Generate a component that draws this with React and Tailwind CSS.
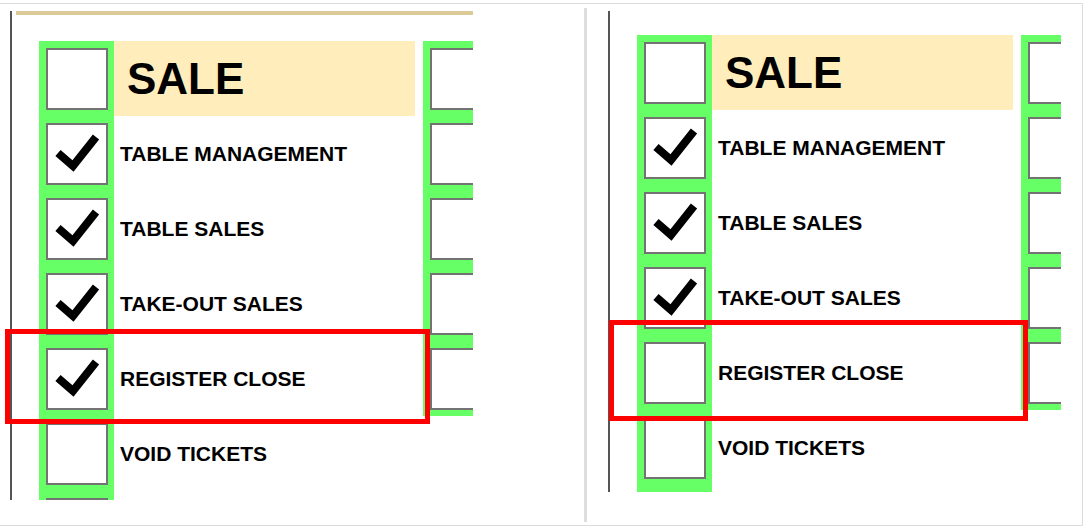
import React from "react";

function Box({ checked }) {
  return (
    <div className="relative w-[62px] h-[62px] shrink-0 border-2 border-[#737373] bg-white">
      {checked && (
        <svg
          className="absolute left-0 top-0"
          width="58"
          height="58"
          viewBox="0 0 58 58"
        >
          <polyline
            points="10,28 25,41 48,12"
            fill="none"
            stroke="#000"
            strokeWidth="8"
            strokeLinejoin="miter"
            strokeLinecap="butt"
          />
        </svg>
      )}
    </div>
  );
}

const LABELS = [
  "TABLE MANAGEMENT",
  "TABLE SALES",
  "TAKE-OUT SALES",
  "REGISTER CLOSE",
  "VOID TICKETS",
];

function Grid({ checks }) {
  return (
    <div className="flex items-start">
      <div className="w-[75px] shrink-0 bg-[#66ff66] flex flex-col gap-[13px] pl-[7px] pt-[7px] pb-[20px]">
        {checks.map((c, i) => (
          <Box key={i} checked={c} />
        ))}
      </div>
      <div className="w-[309px] shrink-0 flex flex-col">
        <div className="w-[301px] h-[75px] bg-[#ffeebb] flex items-center pl-[13px] text-[44px] font-bold leading-none text-black">
          SALE
        </div>
        {LABELS.map((l) => (
          <div
            key={l}
            className="h-[75px] flex items-center pl-[6px] text-[21px] font-bold leading-none text-black whitespace-nowrap"
          >
            {l}
          </div>
        ))}
      </div>
      <div className="w-[90px] shrink-0 bg-[#66ff66] flex flex-col gap-[13px] pl-[7px] pt-[7px] pb-[6px]">
        {[0, 1, 2, 3, 4].map((i) => (
          <Box key={i} checked={false} />
        ))}
      </div>
    </div>
  );
}

export default function App() {
  return (
    <div
      className="relative w-[1084px] h-[527px] bg-white pt-[3px] overflow-hidden text-black"
      style={{ fontFamily: "'Liberation Sans', Arial, sans-serif" }}
    >
      <div className="w-[1083px] h-[523px] border-t border-b border-r border-[#dcdcdc] flex">
        {/* Left panel */}
        <div className="w-[584px] shrink-0 pl-[10px] pt-[7px]">
          <div className="w-[463px] h-[489px] border-l-2 border-[#555555] overflow-hidden pl-[4px]">
            <div className="h-[4px] bg-[#dccb98]" />
            <div className="mt-[26px] ml-[23px]">
              <Grid checks={[false, true, true, true, true, false, false]} />
            </div>
          </div>
        </div>
        {/* Divider */}
        <div className="w-[3px] shrink-0 mt-[4px] h-[514px] bg-[#dedede]" />
        {/* Right panel */}
        <div className="flex-1 pl-[21px] pt-[7px]">
          <div className="w-[453px] h-[481px] border-l-2 border-[#555555] overflow-hidden">
            <div className="mt-[24px] ml-[27px]">
              <Grid checks={[false, true, true, true, false, false, false]} />
            </div>
          </div>
        </div>
      </div>
      {/* Red highlight boxes */}
      <div className="absolute left-[5px] top-[329px] w-[425px] h-[95px] border-[5px] border-[#ff0000]" />
      <div className="absolute left-[609px] top-[320px] w-[419px] h-[101px] border-[5px] border-[#ff0000]" />
    </div>
  );
}
